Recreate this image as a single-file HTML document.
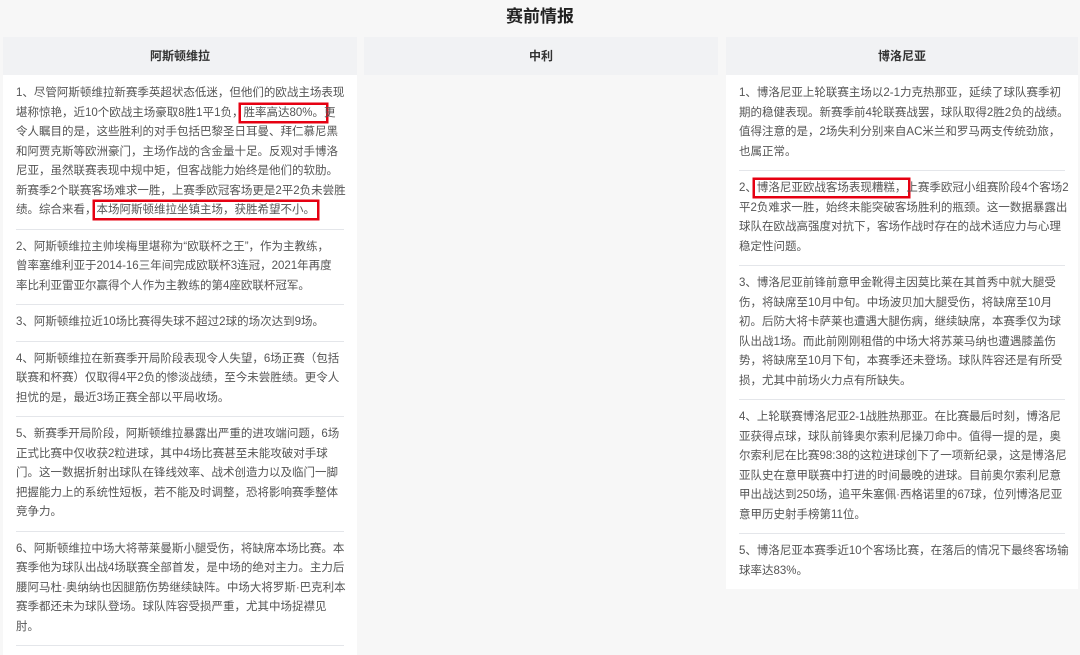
<!DOCTYPE html>
<html><head><meta charset="utf-8">
<style>
*{margin:0;padding:0;box-sizing:border-box}
body{width:1080px;height:645px;overflow:hidden;background:#f7f7f7;font-family:"Liberation Sans","Noto Sans CJK SC",sans-serif;color:#555;position:relative}
h1{position:absolute;top:5px;left:0;width:1080px;text-align:center;font-size:17px;font-weight:bold;color:#222;line-height:24px}
.col{position:absolute;top:37px}
.hd{height:38px;background:#f1f2f4;text-align:center;font-size:12px;font-weight:bold;color:#333;line-height:38px}
.bd{background:#fff;padding:0 13px}
.it{padding:8px 0 8px;border-bottom:1px solid #e4e6ea;font-size:11.5px;line-height:19.5px}
.it:first-child{padding-top:9px}
.it.last{border-bottom:none}
.it div{white-space:nowrap}
.r{box-shadow:0 0 0 2.5px #e60012;padding:2px 2px;margin:0 -2px}
</style></head><body>
<h1>赛前情报</h1>
<div class="col" style="left:3px;width:354px">
<div class="hd">阿斯顿维拉</div>
<div class="bd" style="height:580px">
<div class="it"><div>1、尽管阿斯顿维拉新赛季英超状态低迷，但他们的欧战主场表现</div><div>堪称惊艳，近10个欧战主场豪取8胜1平1负，<span class="r">胜率高达80%。</span>更</div><div>令人瞩目的是，这些胜利的对手包括巴黎圣日耳曼、拜仁慕尼黑</div><div>和阿贾克斯等欧洲豪门，主场作战的含金量十足。反观对手博洛</div><div>尼亚，虽然联赛表现中规中矩，但客战能力始终是他们的软肋。</div><div>新赛季2个联赛客场难求一胜，上赛季欧冠客场更是2平2负未尝胜</div><div>绩。综合来看，<span class="r">本场阿斯顿维拉坐镇主场，获胜希望不小。</span></div></div>
<div class="it"><div>2、阿斯顿维拉主帅埃梅里堪称为“欧联杯之王”，作为主教练，</div><div>曾率塞维利亚于2014-16三年间完成欧联杯3连冠，2021年再度</div><div>率比利亚雷亚尔赢得个人作为主教练的第4座欧联杯冠军。</div></div>
<div class="it"><div>3、阿斯顿维拉近10场比赛得失球不超过2球的场次达到9场。</div></div>
<div class="it"><div>4、阿斯顿维拉在新赛季开局阶段表现令人失望，6场正赛（包括</div><div>联赛和杯赛）仅取得4平2负的惨淡战绩，至今未尝胜绩。更令人</div><div>担忧的是，最近3场正赛全部以平局收场。</div></div>
<div class="it"><div>5、新赛季开局阶段，阿斯顿维拉暴露出严重的进攻端问题，6场</div><div>正式比赛中仅收获2粒进球，其中4场比赛甚至未能攻破对手球</div><div>门。这一数据折射出球队在锋线效率、战术创造力以及临门一脚</div><div>把握能力上的系统性短板，若不能及时调整，恐将影响赛季整体</div><div>竞争力。</div></div>
<div class="it"><div>6、阿斯顿维拉中场大将蒂莱曼斯小腿受伤，将缺席本场比赛。本</div><div>赛季他为球队出战4场联赛全部首发，是中场的绝对主力。主力后</div><div>腰阿马杜·奥纳纳也因腿筋伤势继续缺阵。中场大将罗斯·巴克利本</div><div>赛季都还未为球队登场。球队阵容受损严重，尤其中场捉襟见</div><div>肘。</div></div>
</div></div>
<div class="col" style="left:364px;width:354px">
<div class="hd">中利</div>
</div>
<div class="col" style="left:726px;width:352px">
<div class="hd">博洛尼亚</div>
<div class="bd">
<div class="it"><div>1、博洛尼亚上轮联赛主场以2-1力克热那亚，延续了球队赛季初</div><div>期的稳健表现。新赛季前4轮联赛战罢，球队取得2胜2负的战绩。</div><div>值得注意的是，2场失利分别来自AC米兰和罗马两支传统劲旅，</div><div>也属正常。</div></div>
<div class="it"><div>2、<span class="r">博洛尼亚欧战客场表现糟糕，</span>上赛季欧冠小组赛阶段4个客场2</div><div>平2负难求一胜，始终未能突破客场胜利的瓶颈。这一数据暴露出</div><div>球队在欧战高强度对抗下，客场作战时存在的战术适应力与心理</div><div>稳定性问题。</div></div>
<div class="it"><div>3、博洛尼亚前锋前意甲金靴得主因莫比莱在其首秀中就大腿受</div><div>伤，将缺席至10月中旬。中场波贝加大腿受伤，将缺席至10月</div><div>初。后防大将卡萨莱也遭遇大腿伤病，继续缺席，本赛季仅为球</div><div>队出战1场。而此前刚刚租借的中场大将苏莱马纳也遭遇膝盖伤</div><div>势，将缺席至10月下旬，本赛季还未登场。球队阵容还是有所受</div><div>损，尤其中前场火力点有所缺失。</div></div>
<div class="it"><div>4、上轮联赛博洛尼亚2-1战胜热那亚。在比赛最后时刻，博洛尼</div><div>亚获得点球，球队前锋奥尔索利尼操刀命中。值得一提的是，奥</div><div>尔索利尼在比赛98:38的这粒进球创下了一项新纪录，这是博洛尼</div><div>亚队史在意甲联赛中打进的时间最晚的进球。目前奥尔索利尼意</div><div>甲出战达到250场，追平朱塞佩·西格诺里的67球，位列博洛尼亚</div><div>意甲历史射手榜第11位。</div></div>
<div class="it last"><div>5、博洛尼亚本赛季近10个客场比赛，在落后的情况下最终客场输</div><div>球率达83%。</div></div>
</div></div>
</body></html>
